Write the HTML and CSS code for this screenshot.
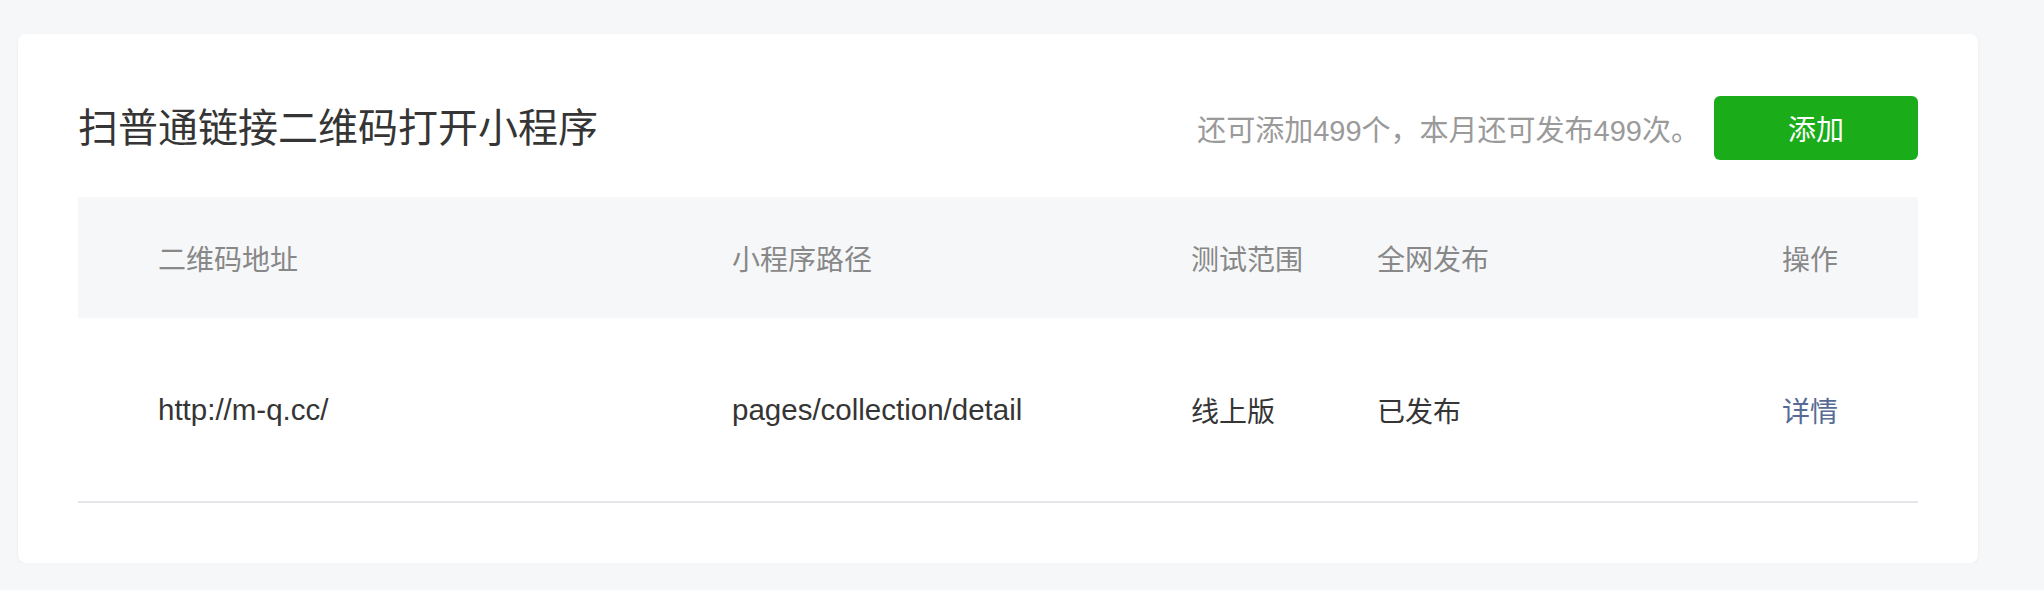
FILE: index.html
```html
<!DOCTYPE html>
<html lang="zh-CN">
<head>
<meta charset="utf-8">
<title>扫普通链接二维码打开小程序</title>
<link rel="stylesheet" href="styles.css">
</head>
<body>
<div class="page">
  <section class="card">
    <div class="card-head">
      <h2 class="title">扫普通链接二维码打开小程序</h2>
      <div class="head-right">
        <span class="quota">还可添加499个，本月还可发布499次。</span>
        <button class="btn-add">添加</button>
      </div>
    </div>
    <div class="table">
      <div class="row row-head">
        <div class="cell">二维码地址</div>
        <div class="cell">小程序路径</div>
        <div class="cell">测试范围</div>
        <div class="cell">全网发布</div>
        <div class="cell">操作</div>
      </div>
      <div class="row row-body">
        <div class="cell latin">http://m-q.cc/</div>
        <div class="cell latin">pages/collection/detail</div>
        <div class="cell">线上版</div>
        <div class="cell">已发布</div>
        <div class="cell"><a class="link" href="#">详情</a></div>
      </div>
    </div>
  </section>
</div>
</body>
</html>
```

FILE: styles.css
```css
* { box-sizing: border-box; }
html, body {
  margin: 0;
  padding: 0;
  background: #f6f7f9;
  font-family: "Liberation Sans", "Noto Sans CJK SC", sans-serif;
  color: #353535;
}
.page {
  padding: 34px 66px 0 18px;
}
.card {
  background: #ffffff;
  border-radius: 8px;
  box-shadow: 0 1px 3px rgba(0, 0, 0, 0.06);
  padding: 62px 60px 60px;
  height: 529px;
}
.card-head {
  display: flex;
  align-items: center;
  justify-content: space-between;
  height: 64px;
  margin-bottom: 37px;
}
.title {
  margin: 0;
  font-weight: 400;
  font-size: 40px;
  line-height: 1;
  color: #353535;
}
.head-right {
  display: flex;
  align-items: center;
  gap: 14px;
}
.quota {
  font-size: 29px;
  color: #9a9a9a;
}
.btn-add {
  width: 204px;
  height: 64px;
  border: none;
  border-radius: 6px;
  background: #1aad19;
  color: #ffffff;
  font-family: inherit;
  font-size: 28px;
  cursor: pointer;
}
.row {
  display: grid;
  grid-template-columns: 574px 459px 186px 405px 1fr;
  align-items: center;
  padding-left: 80px;
  font-size: 28px;
}
.row-head {
  height: 121px;
  background: #f6f7f9;
  color: #888888;
}
.row-body {
  height: 185px;
  border-bottom: 2px solid #e5e5ea;
  color: #353535;
}
.latin {
  font-size: 29.5px;
}
.link {
  color: #576b95;
  text-decoration: none;
}
```
